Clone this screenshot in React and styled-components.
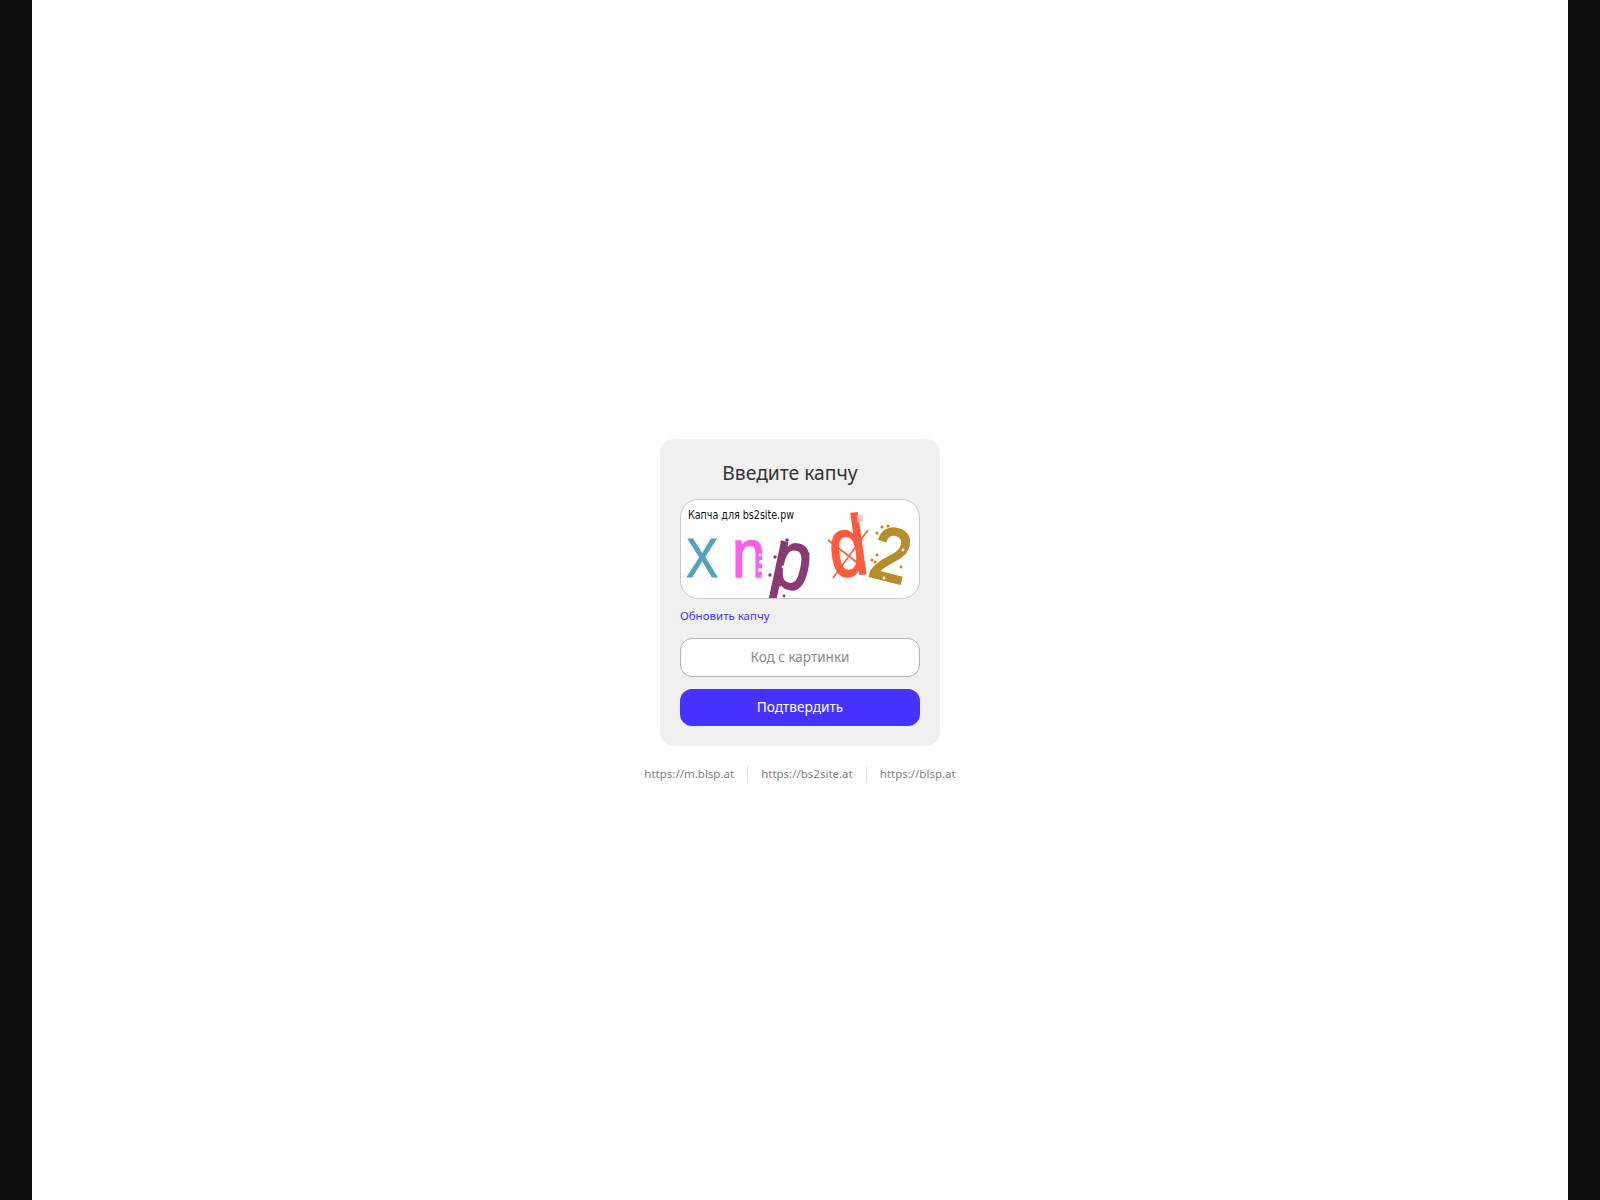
import React from "react";
import styled, { createGlobalStyle } from "styled-components";

const fontStack = `"Noto Sans", "Open Sans", sans-serif`;
const accent = "#4733ff";

const GlobalStyle = createGlobalStyle`
  html, body {
    margin: 0;
    padding: 0;
    background: #0e0e0e;
  }
  * {
    box-sizing: border-box;
  }
`;

const Page = styled.div`
  width: 1536px;
  min-height: 1200px;
  margin: 0 auto;
  padding-top: 20px;
  background: #ffffff;
  display: flex;
  flex-direction: column;
  align-items: center;
  justify-content: center;
  font-family: ${fontStack};
`;

const Card = styled.form`
  width: 280px;
  padding: 20px;
  background: #f0f0f0;
  border-radius: 14px;
  display: flex;
  flex-direction: column;
`;

const Title = styled.h1`
  margin: 0 0 12px;
  padding-right: 20px;
  font-size: 19.3px;
  font-weight: 400;
  line-height: 28px;
  text-align: center;
  color: #333333;
`;

const CaptchaFrame = styled.div`
  height: 100px;
  background: #ffffff;
  border: 1px solid #c8c8c8;
  border-radius: 18px;
  overflow: hidden;
`;

const CaptchaImage = styled.svg`
  display: block;
  width: 238px;
  height: 98px;
`;

const RefreshLink = styled.a`
  margin: 9px 0 14px;
  font-size: 11.5px;
  line-height: 16px;
  color: ${accent};
  text-decoration: none;
  cursor: pointer;
`;

const CodeInput = styled.input`
  height: 39px;
  margin-bottom: 12px;
  padding: 0 12px;
  background: #ffffff;
  border: 1px solid #b4b4b4;
  border-radius: 12px;
  font-family: ${fontStack};
  font-size: 13.5px;
  text-align: center;
  outline: none;

  &::placeholder {
    color: #8a8a8a;
    opacity: 1;
  }
`;

const SubmitButton = styled.button`
  height: 37px;
  padding: 0 0 2px;
  border: none;
  border-radius: 12px;
  background: ${accent};
  color: #ffffff;
  font-family: ${fontStack};
  font-size: 13.7px;
  cursor: pointer;
`;

const Mirrors = styled.nav`
  margin-top: 20px;
  display: flex;
  align-items: center;
`;

const Mirror = styled.a`
  padding: 0 13px;
  font-size: 11.5px;
  line-height: 16px;
  color: #808080;
  text-decoration: none;

  & + & {
    border-left: 1px solid #e0e0e0;
  }
`;

const Letter = styled.text`
  font-family: "Liberation Sans", sans-serif;
  font-weight: 400;
  fill: ${(props) => props.color};
  stroke: ${(props) => props.color};
  stroke-width: ${(props) => props.weight}px;
`;

const CaptionText = styled.text`
  font-family: "DejaVu Sans Condensed", "DejaVu Sans", sans-serif;
  font-size: 11.6px;
  fill: #111111;
`;

const dots = [
  // n
  [64, 52, "#fff", 1.5], [72, 58, "#fff", 1.5], [63, 65, "#fff", 1.4], [79, 55, "#fff", 1.4],
  [80, 62, "#fff", 2], [85, 62, "#fff", 2], [79, 70, "#fff", 2], [86, 72, "#fff", 2], [82, 76, "#fff", 2],
  // p
  [106, 40, "#8a3a72", 1.8], [94, 57, "#8a3a72", 1.7], [89, 75, "#8a3a72", 1.7], [99, 85, "#8a3a72", 1.5],
  [127, 54, "#8a3a72", 1.7], [124, 70, "#8a3a72", 1.6], [117, 82, "#8a3a72", 1.6], [103, 96, "#8a3a72", 1.4],
  [107, 58, "#fff", 1.6], [110, 59, "#fff", 1.6], [112, 73, "#fff", 1.6], [115, 74, "#fff", 1.6], [102, 67, "#fff", 1.4],
  // 2
  [207, 26, "#b98c2a", 1.6], [201, 27, "#b98c2a", 1.6], [196, 33, "#b98c2a", 1.6], [191, 60, "#b98c2a", 1.6],
  [196, 55, "#b98c2a", 1.5], [194, 62, "#b98c2a", 1.5], [220, 67, "#b98c2a", 1.5], [203, 78, "#fff", 1.4],
  [208, 71, "#fff", 1.4], [222, 50, "#fff", 1.4],
];

const CaptchaPicture = () => (
  <CaptchaImage viewBox="0 0 238 98">
    <CaptionText x="7" y="19" textLength="106" lengthAdjust="spacingAndGlyphs">Капча для bs2site.pw</CaptionText>
    <Letter color="#53a3bd" weight={1} fontSize="56" transform="translate(5 77) scale(.86 1)">X</Letter>
    <Letter color="#ff5cf0" weight={1.5} fontSize="68" transform="translate(51 77) scale(.88 1)">n</Letter>
    <Letter color="#8a3a72" weight={2} fontSize="84" transform="translate(87 84) rotate(12) scale(.82 1)">p</Letter>
    <Letter color="#ff5a3c" weight={2} fontSize="84" transform="translate(152 78) rotate(-8) scale(.8 1)">d</Letter>
    <rect x="176" y="15" width="6" height="7" fill="#ffc9c4" transform="rotate(-8 179 18)" />
    <line x1="147" y1="40" x2="182" y2="67" stroke="#ff5a3c" strokeWidth="1.6" />
    <line x1="152" y1="78" x2="187" y2="30" stroke="#ff5a3c" strokeWidth="1.6" />
    <Letter color="#b98c2a" weight={3} fontSize="74" transform="translate(186 75) rotate(14) scale(.9 1)">2</Letter>
    {dots.map(([cx, cy, fill, r]) => (
      <circle key={`${cx}-${cy}`} cx={cx} cy={cy} r={r} fill={fill} />
    ))}
  </CaptchaImage>
);

export default function App() {
  return (
    <>
      <GlobalStyle />
      <Page>
        <Card onSubmit={(e) => e.preventDefault()}>
          <Title>Введите капчу</Title>
          <CaptchaFrame>
            <CaptchaPicture />
          </CaptchaFrame>
          <RefreshLink>Обновить капчу</RefreshLink>
          <CodeInput placeholder="Код с картинки" />
          <SubmitButton type="submit">Подтвердить</SubmitButton>
        </Card>
        <Mirrors>
          <Mirror href="#">https://m.blsp.at</Mirror>
          <Mirror href="#">https://bs2site.at</Mirror>
          <Mirror href="#">https://blsp.at</Mirror>
        </Mirrors>
      </Page>
    </>
  );
}
